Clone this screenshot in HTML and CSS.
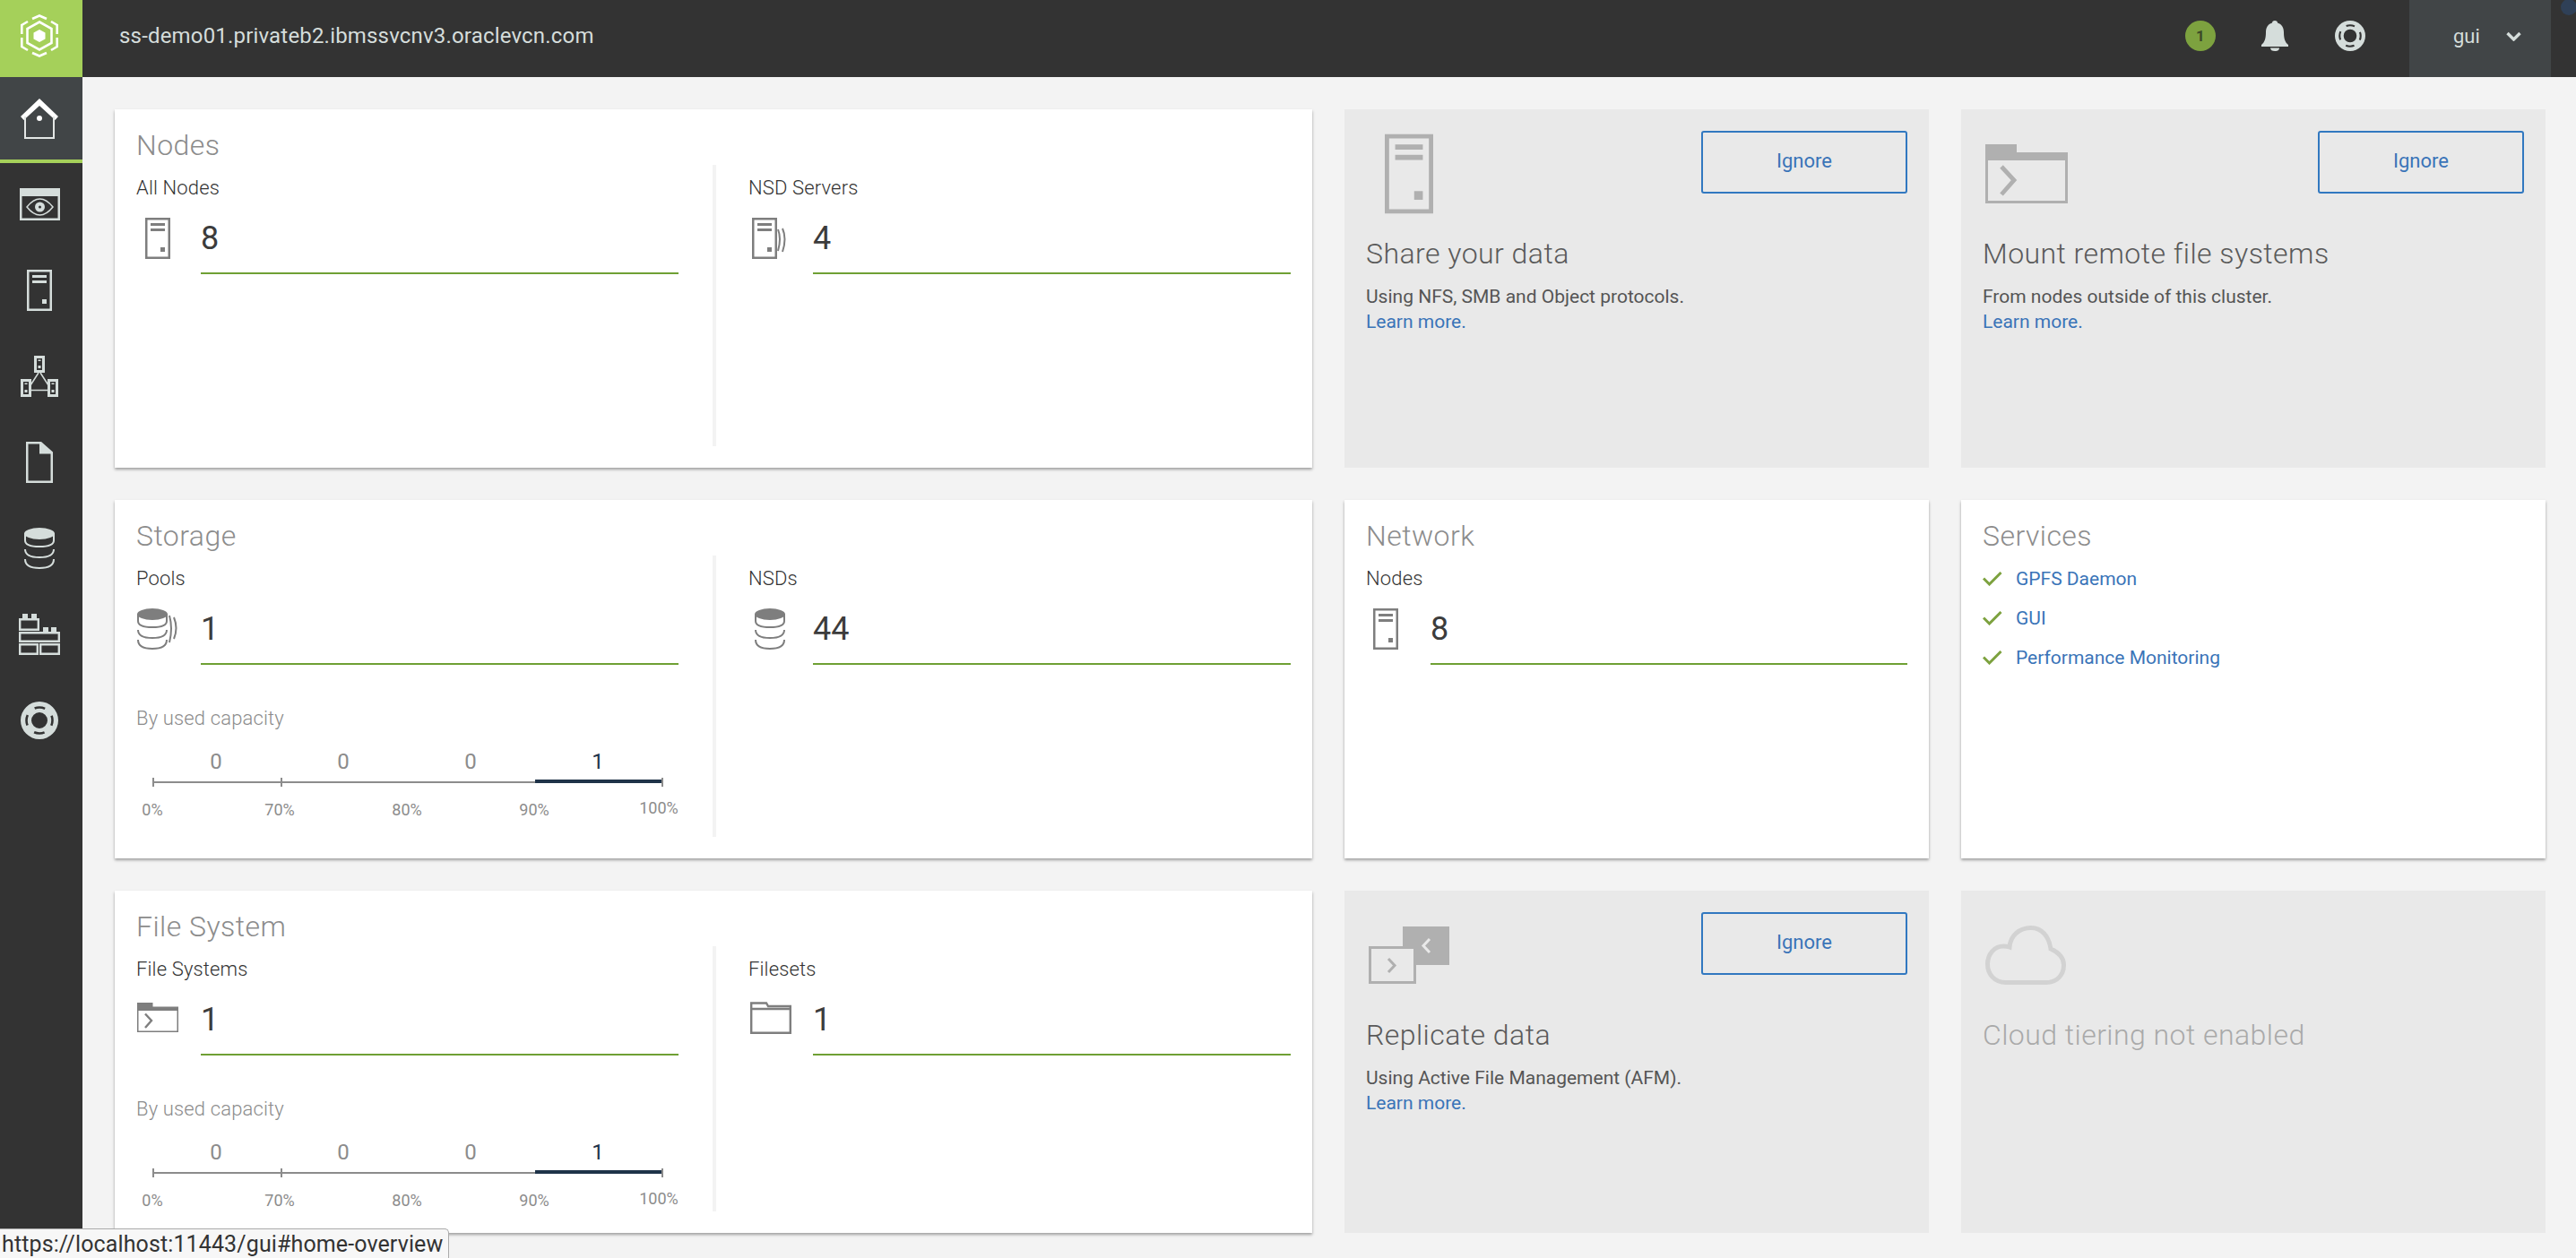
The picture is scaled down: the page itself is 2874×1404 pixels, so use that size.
FILE: index.html
```html
<!DOCTYPE html>
<html lang="en">
<head>
  <meta charset="UTF-8">
  <title>Overview</title>
  <link rel="stylesheet" href="styles.css">
</head>
<body>
  <!-- Shared icons -->
  <svg class="icon-defs" xmlns="http://www.w3.org/2000/svg">
    <symbol id="i-server" viewBox="0 0 28 46">
      <path fill-rule="evenodd" d="M0 0h28v46H0z M2.5 2.5v41h23v-41z"/>
      <rect x="6" y="6" width="16" height="3"/>
      <rect x="6" y="12" width="16" height="3"/>
      <rect x="17" y="33" width="5" height="5"/>
    </symbol>
    <symbol id="i-server-group" viewBox="0 0 40 46">
      <path fill-rule="evenodd" d="M0 0h28v46H0z M2.5 2.5v41h23v-41z"/>
      <rect x="6" y="6" width="16" height="3"/>
      <rect x="6" y="12" width="16" height="3"/>
      <rect x="17" y="33" width="5" height="5"/>
      <path d="M29 13 Q33 23 29 37 M34 12 Q39 23 34 38" fill="none" stroke="currentColor" stroke-width="2"/>
    </symbol>
    <symbol id="i-db" viewBox="0 0 34 46">
      <ellipse cx="17" cy="6.5" rx="17" ry="6.5"/>
      <path d="M1 6 V14 Q1 21 17 21 Q33 21 33 14 V6 M1 24 Q1 33 17 33 Q33 33 33 24 M1 35 Q1 45 17 45 Q33 45 33 35" fill="none" stroke="currentColor" stroke-width="2"/>
    </symbol>
    <symbol id="i-db-group" viewBox="0 0 46 46">
      <ellipse cx="17" cy="6.5" rx="17" ry="6.5"/>
      <path d="M1 6 V14 Q1 21 17 21 Q33 21 33 14 V6 M1 24 Q1 33 17 33 Q33 33 33 24 M1 35 Q1 45 17 45 Q33 45 33 35 M36 8 Q40 22 36 38 M41 10 Q46 22 41 34" fill="none" stroke="currentColor" stroke-width="2"/>
    </symbol>
    <symbol id="i-fileset" viewBox="0 0 46 33">
      <path fill-rule="evenodd" d="M0 0h17.5v4.5H46V33H0z M1.5 9v22.5h43V9z"/>
      <path d="M9 12.5 L16 20 L9 28" fill="none" stroke="currentColor" stroke-width="2.4"/>
    </symbol>
    <symbol id="i-buoy" viewBox="0 0 42 42">
      <path fill-rule="evenodd" d="M21 0a21 21 0 1 0 0 42a21 21 0 1 0 0-42z M21 12a9 9 0 1 1 0 18a9 9 0 1 1 0-18z"/>
      <circle cx="21" cy="21" r="14.5" fill="none" stroke="#333" stroke-width="2.6" stroke-dasharray="11.78 11" stroke-dashoffset="5.89"/>
    </symbol>
  </svg>

  <header class="topbar">
    <a class="brand">
      <svg width="42" height="48" viewBox="0 0 42 48" fill="none" stroke="#fff" stroke-width="2.6">
        <path d="M13 5 L21 1.5 L29 5 M34 8 L40.7 12 V22 M40.7 26 V36 L34 40 M29 43 L21 46.5 L13 43 M8 40 L1.3 36 V26 M1.3 22 V12 L8 8"/>
        <path d="M21 8.5 L34.5 16 V32 L21 39.5 L7.5 32 V16 Z"/>
        <path d="M21 17 L27.5 20.5 V27.5 L21 31 L14.500 27.500 V20.500 Z" fill="#fff" stroke="none"/>
      </svg>
    </a>
    <div class="hostname">ss-demo01.privateb2.ibmssvcnv3.oraclevcn.com</div>
    <div class="topbar-tools">
      <span class="event-badge">1</span>
      <svg class="tool-icon bell" width="30" height="34" viewBox="0 0 30 34">
        <path d="M15 0 C17 0 18 1 18 2.500 C23 4 25 8 25 13 C25 19 26 24 30 27 V29 H0 V27 C4 24 5 19 5 13 C5 8 7 4 12 2.500 C12 1 13 0 15 0 Z"/>
        <path d="M10 30.500 H20 C20 33 18 34 15 34 C12 34 10 33 10 30.500 Z"/>
      </svg>
      <svg class="tool-icon buoy" width="34" height="34"><use href="#i-buoy"/></svg>
      <div class="user-menu">
        <span>gui</span>
        <svg width="17" height="11" viewBox="0 0 17 11" fill="none" stroke="#d5dddb" stroke-width="3.4"><path d="M1.500 2 L8.500 9 L15.500 2"/></svg>
      </div>
    </div>
    <span class="corner-dot"></span>
  </header>

  <div class="app">
    <nav class="sidebar">
      <a class="nav-item active">
        <svg width="42" height="45" viewBox="0 0 42 45">
          <path d="M21 0 L42 20 L38.500 24 L21 8 L3.500 24 L0 20 Z" fill="#fff"/>
          <path d="M5 20 V44 H37 V20" fill="none" stroke="#e3e6e5" stroke-width="2"/>
          <circle cx="21" cy="22" r="3" fill="#fff"/>
        </svg>
      </a>
      <a class="nav-item">
        <svg width="45" height="36" viewBox="0 0 45 36">
          <path fill-rule="evenodd" d="M0 0h45v36H0z M2.500 9v24.500h40V9z"/>
          <path d="M8 21 Q22.500 3 37 21 Q22.500 39 8 21 Z" fill="none" stroke="currentColor" stroke-width="1.500"/>
          <path fill-rule="evenodd" d="M22.500 15.500a5.500 5.500 0 1 0 0 11a5.500 5.500 0 1 0 0-11z M22.500 19.500a1.500 1.500 0 1 1 0 3a1.500 1.500 0 1 1 0-3z"/>
        </svg>
      </a>
      <a class="nav-item"><svg width="28" height="46"><use href="#i-server"/></svg></a>
      <a class="nav-item">
        <svg width="42" height="46" viewBox="0 0 42 46">
          <path d="M20 19 L11 33 M22 19 L31 33 M12 38.500 H30" fill="none" stroke="currentColor" stroke-width="1.500"/>
          <path fill-rule="evenodd" d="M15 0h12v19H15z M18 3v13h6V3z M0 26h12v20H0z M3 29v14h6V29z M30 26h12v20H30z M33 29v14h6V29z"/>
          <path d="M19.500 4.500h3v1.500h-3z M19.500 11h3v3h-3z M4.500 30.500h3v1.500h-3z M4.500 38h3v3h-3z M34.500 30.500h3v1.500h-3z M34.500 38h3v3h-3z"/>
        </svg>
      </a>
      <a class="nav-item">
        <svg width="30" height="46" viewBox="0 0 30 46">
          <path fill-rule="evenodd" d="M0 0H17L30 11.500V46H0z M2.500 2.500v41h25V13.500H15V2.500z"/>
        </svg>
      </a>
      <a class="nav-item"><svg width="34" height="46"><use href="#i-db"/></svg></a>
      <a class="nav-item">
        <svg width="46" height="46" viewBox="0 0 46 46">
          <path d="M4 0h6v6H4z M14 0h6v6h-6z M27 15h6v6h-6z M36 15h6v6h-6z"/>
          <path d="M1.200 6.200h20.600v11.600H1.200z M1.200 21.200h43.600v9.600H1.200z M1.200 34.200h19.600v10.600H1.200z M24.200 34.200h20.600v10.600H24.200z" fill="none" stroke="currentColor" stroke-width="2.400"/>
        </svg>
      </a>
      <a class="nav-item"><svg width="42" height="42"><use href="#i-buoy"/></svg></a>
    </nav>

    <main class="dashboard">
      <section class="card summary">
        <h2 class="card-title">Nodes</h2>
        <div class="card-body">
          <div class="metric-col">
            <div class="metric-label">All Nodes</div>
            <div class="metric-row">
              <span class="metric-icon"><svg class="ic-server" width="28" height="46"><use href="#i-server"/></svg></span>
              <div class="metric-value">8</div>
            </div>
          </div>
          <div class="metric-col">
            <div class="metric-label">NSD Servers</div>
            <div class="metric-row">
              <span class="metric-icon"><svg class="ic-nsd" width="40" height="46"><use href="#i-server-group"/></svg></span>
              <div class="metric-value">4</div>
            </div>
          </div>
        </div>
      </section>

      <section class="card hint">
        <div class="hint-top">
          <svg class="hint-server" width="54" height="90"><use href="#i-server"/></svg>
          <button class="ignore-btn">Ignore</button>
        </div>
        <h3 class="hint-title">Share your data</h3>
        <p class="hint-text">Using NFS, SMB and Object protocols.</p>
        <a class="link">Learn more.</a>
      </section>

      <section class="card hint">
        <div class="hint-top">
          <svg class="hint-folder" width="92" height="66"><use href="#i-fileset"/></svg>
          <button class="ignore-btn">Ignore</button>
        </div>
        <h3 class="hint-title">Mount remote file systems</h3>
        <p class="hint-text">From nodes outside of this cluster.</p>
        <a class="link">Learn more.</a>
      </section>

      <section class="card summary">
        <h2 class="card-title">Storage</h2>
        <div class="card-body">
          <div class="metric-col">
            <div class="metric-label">Pools</div>
            <div class="metric-row">
              <span class="metric-icon"><svg class="ic-pool" width="46" height="46"><use href="#i-db-group"/></svg></span>
              <div class="metric-value">1</div>
            </div>
            <div class="capacity">
              <div class="capacity-title">By used capacity</div>
              <div class="capacity-counts"><span>0</span><span>0</span><span>0</span><span class="high">1</span></div>
              <div class="capacity-axis">
                <i class="tick"></i><i class="seg"></i><i class="tick"></i><i class="seg"></i><i class="seg"></i><i class="seg high"></i><i class="tick"></i>
              </div>
              <div class="capacity-labels"><span>0%</span><span>70%</span><span>80%</span><span>90%</span><span>100%</span></div>
            </div>
          </div>
          <div class="metric-col">
            <div class="metric-label">NSDs</div>
            <div class="metric-row">
              <span class="metric-icon"><svg class="ic-nsds" width="34" height="46"><use href="#i-db"/></svg></span>
              <div class="metric-value">44</div>
            </div>
          </div>
        </div>
      </section>

      <section class="card summary">
        <h2 class="card-title">Network</h2>
        <div class="card-body">
          <div class="metric-col single">
            <div class="metric-label">Nodes</div>
            <div class="metric-row">
              <span class="metric-icon"><svg class="ic-net" width="28" height="46"><use href="#i-server"/></svg></span>
              <div class="metric-value">8</div>
            </div>
          </div>
        </div>
      </section>

      <section class="card summary">
        <h2 class="card-title">Services</h2>
        <ul class="service-list">
          <li><svg width="22" height="16" viewBox="0 0 22 16"><path d="M1 7.500 L7.500 14 L20.500 1"/></svg><a class="link">GPFS Daemon</a></li>
          <li><svg width="22" height="16" viewBox="0 0 22 16"><path d="M1 7.500 L7.500 14 L20.500 1"/></svg><a class="link">GUI</a></li>
          <li><svg width="22" height="16" viewBox="0 0 22 16"><path d="M1 7.500 L7.500 14 L20.500 1"/></svg><a class="link">Performance Monitoring</a></li>
        </ul>
      </section>

      <section class="card summary">
        <h2 class="card-title">File System</h2>
        <div class="card-body">
          <div class="metric-col">
            <div class="metric-label">File Systems</div>
            <div class="metric-row">
              <span class="metric-icon"><svg class="ic-fs" width="46" height="33"><use href="#i-fileset"/></svg></span>
              <div class="metric-value">1</div>
            </div>
            <div class="capacity">
              <div class="capacity-title">By used capacity</div>
              <div class="capacity-counts"><span>0</span><span>0</span><span>0</span><span class="high">1</span></div>
              <div class="capacity-axis">
                <i class="tick"></i><i class="seg"></i><i class="tick"></i><i class="seg"></i><i class="seg"></i><i class="seg high"></i><i class="tick"></i>
              </div>
              <div class="capacity-labels"><span>0%</span><span>70%</span><span>80%</span><span>90%</span><span>100%</span></div>
            </div>
          </div>
          <div class="metric-col">
            <div class="metric-label">Filesets</div>
            <div class="metric-row">
              <span class="metric-icon">
                <svg class="ic-folder" width="46" height="36" viewBox="0 0 46 36" fill="none" stroke="currentColor" stroke-width="2.400">
                  <path d="M1.200 8 V1.500 H18 L20 5 H44.800 V34.800 H1.200 Z M1.200 8 H44.800"/>
                </svg>
              </span>
              <div class="metric-value">1</div>
            </div>
          </div>
        </div>
      </section>

      <section class="card hint">
        <div class="hint-top">
          <svg class="hint-replicate" width="90" height="64" viewBox="0 0 90 64">
            <rect x="38" y="0" width="52" height="43" fill="#b0b0b0"/>
            <path d="M68 14 L61 21.500 L68 29" fill="none" stroke="#e9e9e9" stroke-width="3"/>
            <rect x="1.500" y="23.500" width="50" height="39" fill="#e9e9e9" stroke="#b0b0b0" stroke-width="3"/>
            <path d="M22 36 L29 43.500 L22 51" fill="none" stroke="#b0b0b0" stroke-width="3"/>
          </svg>
          <button class="ignore-btn">Ignore</button>
        </div>
        <h3 class="hint-title">Replicate data</h3>
        <p class="hint-text">Using Active File Management (AFM).</p>
        <a class="link">Learn more.</a>
      </section>

      <section class="card hint">
        <div class="hint-top">
          <svg class="hint-cloud" width="90" height="66" viewBox="0 0 90 66" fill="none" stroke="#d2d2d2" stroke-width="5">
            <path d="M23 63.500 C10 63.500 2.500 54 2.500 43 C2.500 32 10 23 20 23 Q24 23 27 24 C28 11 38 2.500 51 2.500 C63 2.500 71 12 73 26 C82 30 87.500 36 87.500 44 C87.500 55 80 63.500 68 63.500 Z"/>
          </svg>
        </div>
        <h3 class="hint-title muted">Cloud tiering not enabled</h3>
      </section>
    </main>
  </div>

  <div class="status-url">https://localhost:11443/gui#home-overview</div>
</body>
</html>
```

FILE: styles.css
```css
* {
  box-sizing: border-box;
}
html, body {
  height: 100%;
}
body {
  margin: 0;
  display: flex;
  flex-direction: column;
  height: 100vh;
  overflow: hidden;
  background: #f3f3f3;
  color: #333;
  fill: currentColor;
  font-family: 'Roboto', 'Noto Sans', sans-serif;
}
.icon-defs {
  width: 0;
  height: 0;
  position: absolute;
}
svg {
  display: block;
}

/* Top bar */
.topbar {
  display: flex;
  align-items: center;
  flex: 0 0 86px;
  background: #333;
  color: #d5dddb;
  position: relative;
}
.brand {
  display: flex;
  width: 92px;
  height: 86px;
  padding: 16px 0 0 23px;
  background: #a5d05a;
}
.hostname {
  margin-left: 41px;
  margin-top: -6px;
  font-size: 24px;
  line-height: 28px;
  letter-spacing: 0.18px;
}
.topbar-tools {
  display: flex;
  align-items: center;
  margin-left: auto;
  height: 86px;
  margin-right: 28px;
}
.event-badge {
  width: 34px;
  height: 34px;
  margin-top: -6px;
  border-radius: 50%;
  background: #7da23f;
  color: #3c4a28;
  font-size: 17px;
  font-weight: 700;
  line-height: 34px;
  text-align: center;
}
.tool-icon {
  margin-top: -6px;
}
.bell {
  margin-left: 51px;
}
.buoy {
  margin-left: 52px;
}
.user-menu {
  display: flex;
  align-items: center;
  width: 158px;
  height: 86px;
  margin-left: 49px;
  padding: 0 0 6px 49px;
  background: #414547;
  font-size: 22px;
}
.user-menu svg {
  margin-left: 29px;
}
.corner-dot {
  position: absolute;
  top: -1px;
  right: -1px;
  width: 18px;
  height: 18px;
  border-radius: 50%;
  background: #2f4057;
}

/* Left navigation */
.app {
  display: flex;
  flex: 1;
  min-height: 0;
}
.sidebar {
  flex: 0 0 92px;
  background: #333;
  color: #d5dddb;
}
.nav-item {
  display: flex;
  align-items: center;
  justify-content: center;
  height: 96px;
  padding-right: 4px;
  border-bottom: 4px solid transparent;
}
.nav-item.active {
  background: #414547;
  border-bottom-color: #a5d05a;
}

/* Dashboard grid */
.dashboard {
  flex: 1;
  display: grid;
  grid-template-columns: 1336px 652px 652px;
  grid-template-rows: 400px 400px 382px;
  gap: 36px;
  padding: 36px 0 0 36px;
}
.card {
  display: flex;
  flex-direction: column;
  padding: 20px 24px 24px;
}
.summary {
  background: #fff;
  box-shadow: 0 2px 3px rgba(0, 0, 0, 0.35);
}
.card-title {
  margin: 0;
  height: 42px;
  color: #8c8c8c;
  font-size: 32px;
  font-weight: 300;
  line-height: 40px;
  letter-spacing: 0.45px;
}
.card-body {
  display: flex;
  flex: 1;
}
.metric-col {
  flex: 1;
  min-width: 0;
  padding-right: 38px;
}
.metric-col + .metric-col {
  padding: 0 0 0 36px;
  border-left: 4px solid #f3f3f3;
}
.metric-col.single {
  padding-right: 0;
}
.metric-label {
  margin-top: 14px;
  font-size: 22px;
  font-weight: 300;
  line-height: 24px;
  letter-spacing: 0.15px;
}
.metric-row {
  display: flex;
  margin-top: 18px;
}
.metric-icon {
  flex: 0 0 72px;
  padding-top: 3px;
  color: #7e7e7e;
}
.ic-server { margin-left: 10px; }
.ic-nsd { margin-left: 4px; }
.ic-pool { margin-left: 1px; }
.ic-nsds { margin-left: 7px; }
.ic-net { margin-left: 8px; }
.ic-fs { margin-left: 1px; margin-top: 4px; }
.ic-folder { margin-left: 2px; margin-top: 3px; }
.metric-value {
  flex: 1;
  height: 66px;
  border-bottom: 2px solid #6fa034;
  color: #3c3c3c;
  font-size: 36px;
  line-height: 52px;
}

/* By used capacity chart */
.capacity-title {
  margin-top: 48px;
  color: #8c8c8c;
  font-size: 22px;
  font-weight: 300;
  line-height: 24px;
  letter-spacing: 0.15px;
}
.capacity-counts {
  display: flex;
  width: 568px;
  margin: 24px 0 0 18px;
  color: #8c8c8c;
  font-size: 24px;
  line-height: 24px;
}
.capacity-counts span {
  flex: 1;
  text-align: center;
}
.capacity-counts .high {
  color: #1f3349;
}
.capacity-axis {
  display: flex;
  align-items: center;
  width: 570px;
  height: 10px;
  margin: 6px 0 0 18px;
}
.tick {
  flex: 0 0 2px;
  height: 10px;
  background: #8c8c8c;
}
.seg {
  flex: 1;
  height: 2px;
  background: #8c8c8c;
}
.seg.high {
  height: 4px;
  margin-bottom: 2px;
  background: #1f3349;
}
.capacity-labels {
  display: flex;
  align-items: flex-start;
  gap: 82px;
  margin: 16px 0 0 -12px;
  color: #8c8c8c;
  font-size: 18px;
  line-height: 20px;
}
.capacity-labels span {
  flex: 0 0 60px;
  text-align: center;
}
.capacity-labels span:last-child {
  margin: -2px 0 0 -3px;
}

/* Grey hint cards */
.hint {
  background: #e9e9e9;
  padding-top: 24px;
}
.hint-top {
  display: flex;
  align-items: flex-start;
  justify-content: space-between;
  height: 116px;
  color: #b0b0b0;
}
.hint-server { margin: 3px 0 0 21px; }
.hint-folder { margin: 15px 0 0 3px; }
.hint-replicate { margin: 16px 0 0 3px; }
.hint-cloud { margin: 15px 0 0 3px; }
.ignore-btn {
  width: 230px;
  height: 70px;
  padding: 0 0 3px;
  border: 2px solid #3178c0;
  border-radius: 3px;
  background: transparent;
  color: #3a74b8;
  font-family: inherit;
  font-size: 22px;
}
.hint-title {
  margin: 0;
  color: #5a5a5a;
  font-size: 32px;
  font-weight: 300;
  line-height: 42px;
  letter-spacing: 0.45px;
}
.hint-title.muted {
  color: #a9a9a9;
}
.hint-text {
  margin: 13px 0 0;
  color: #555;
  font-size: 21px;
  line-height: 28px;
}
.link {
  color: #3a74b8;
  font-size: 21px;
  line-height: 28px;
}

/* Services list */
.service-list {
  margin: 0;
  padding: 4px 0 0;
  list-style: none;
}
.service-list li {
  display: flex;
  align-items: center;
  gap: 15px;
  height: 44px;
}
.service-list svg {
  fill: none;
  stroke: #7da23f;
  stroke-width: 3;
}

/* Browser link preview */
.status-url {
  position: absolute;
  left: 0;
  bottom: 0;
  width: 501px;
  height: 33px;
  padding-left: 2px;
  border: 1px solid #aaa;
  border-width: 1px 1px 0 0;
  border-top-right-radius: 5px;
  background: #f7f7f7;
  color: #333;
  font-size: 25px;
  line-height: 33px;
  letter-spacing: 0.12px;
  white-space: nowrap;
}
```
